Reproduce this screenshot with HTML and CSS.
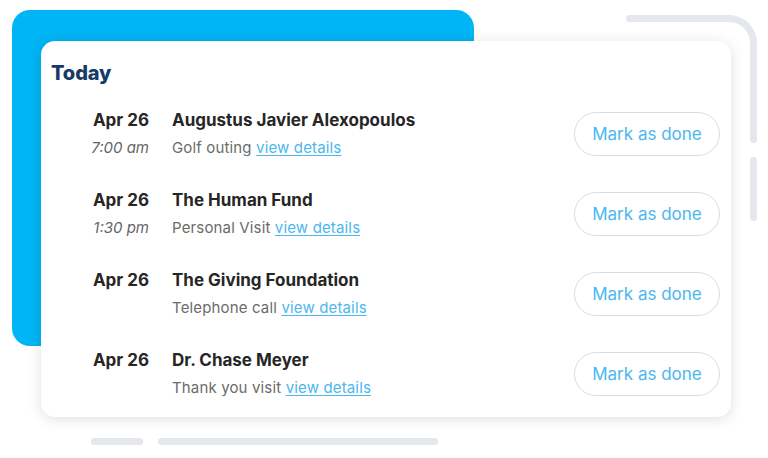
FILE: index.html
```html
<!DOCTYPE html>
<html>
<head>
<meta charset="utf-8">
<link rel="stylesheet" href="styles.css">
</head>
<body>
<div class="stage">
  <div class="panel"></div>
  <div class="bracket"></div>
  <div class="bracket-tail"></div>
  <div class="card">
    <h2 class="title">Today</h2>
    <div class="row">
      <div class="when"><div class="date">Apr 26</div><div class="time">7:00 am</div></div>
      <div class="what"><div class="name">Augustus Javier Alexopoulos</div><div class="desc">Golf outing <a class="link">view details</a></div></div>
      <button class="btn">Mark as done</button>
    </div>
    <div class="row">
      <div class="when"><div class="date">Apr 26</div><div class="time">1:30 pm</div></div>
      <div class="what"><div class="name">The Human Fund</div><div class="desc">Personal Visit <a class="link">view details</a></div></div>
      <button class="btn">Mark as done</button>
    </div>
    <div class="row">
      <div class="when"><div class="date">Apr 26</div><div class="time"></div></div>
      <div class="what"><div class="name">The Giving Foundation</div><div class="desc">Telephone call <a class="link">view details</a></div></div>
      <button class="btn">Mark as done</button>
    </div>
    <div class="row">
      <div class="when"><div class="date">Apr 26</div><div class="time"></div></div>
      <div class="what"><div class="name">Dr. Chase Meyer</div><div class="desc">Thank you visit <a class="link">view details</a></div></div>
      <button class="btn">Mark as done</button>
    </div>
  </div>
  <div class="bars"><span class="bar short"></span><span class="bar long"></span></div>
</div>
</body>
</html>
```
FILE: styles.css
```css
html, body { margin: 0; padding: 0; background: #fff; }
body { width: 768px; height: 458px; overflow: hidden; font-family: Inter, "Open Sans", sans-serif; }
.stage { position: relative; width: 768px; height: 458px; }
.panel { position: absolute; left: 12px; top: 10px; width: 462px; height: 336px; background: #00b5f5; border-radius: 18px; }
.bracket { position: absolute; left: 629px; top: 15px; width: 121px; height: 118px; border-top: 7px solid #e4e8ec; border-right: 7px solid #e4e8ec; border-top-right-radius: 28px; }
.bracket::before { content: ""; position: absolute; left: -3px; top: -7px; width: 7px; height: 7px; background: #e4e8ec; border-radius: 4px; }
.bracket::after { content: ""; position: absolute; right: -7px; bottom: -3px; width: 7px; height: 7px; background: #e4e8ec; border-radius: 4px; }
.bracket-tail { position: absolute; left: 750px; top: 157px; width: 7px; height: 64px; background: #e4e8ec; border-radius: 4px; }
.card { position: absolute; left: 41px; top: 41px; width: 690px; height: 376px; box-sizing: border-box; background: #fff; border-radius: 14px; box-shadow: 0 2px 14px rgba(0,0,0,0.13); padding: 21px 11px 0 0; }
.title { margin: 0 0 10px 10px; font-size: 20px; line-height: 22px; font-weight: 800; color: #173a66; letter-spacing: -0.1px; }
.row { display: flex; align-items: center; height: 80px; }
.when { width: 108px; text-align: right; flex: none; }
.date { font-size: 17px; line-height: 27px; font-weight: 700; color: #262626; }
.time { font-size: 15px; line-height: 27px; font-style: italic; color: #666; height: 27px; }
.what { flex: 1; margin-left: 23px; }
.name { font-size: 17px; line-height: 27px; font-weight: 700; color: #262626; }
.desc { font-size: 15px; line-height: 27px; color: #6b6b6b; letter-spacing: 0.15px; }
.link { color: #4bb7f0; text-decoration: underline; text-underline-offset: 2px; }
.btn { flex: none; width: 146px; height: 44px; border-radius: 22px; border: 1px solid #d9dde1; background: #fff; color: #4bb7f0; font-family: inherit; font-size: 17px; padding: 0; }
.bars { position: absolute; left: 91px; top: 438px; display: flex; gap: 15px; }
.bar { display: block; height: 7px; background: #e4e8ec; border-radius: 3px; }
.bar.short { width: 52px; }
.bar.long { width: 280px; }
```
